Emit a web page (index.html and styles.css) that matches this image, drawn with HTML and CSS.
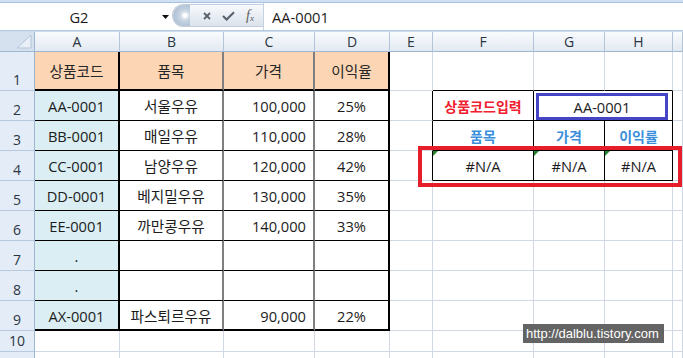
FILE: index.html
```html
<!DOCTYPE html>
<html lang="ko">
<head>
<meta charset="utf-8">
<title>Excel VLOOKUP</title>
<link rel="stylesheet" href="styles.css">
</head>
<body>
<div class="app">
  <div class="ribbon-edge"></div>
  <div class="formula-bar">
    <div class="name-box">G2</div>
    <div class="name-drop"><svg width="7" height="4" viewBox="0 0 7 4"><path d="M0 0H7L3.5 4Z" fill="#111"/></svg></div>
    <div class="fx-group">
      <span class="fx-knob"></span>
      <svg class="fx-cancel" width="8" height="8" viewBox="0 0 8 8"><path d="M1 1L7 7M7 1L1 7" stroke="#59636f" stroke-width="1.9" fill="none"/></svg>
      <svg class="fx-enter" width="13" height="10" viewBox="0 0 13 10"><path d="M1 5L4.6 8.6L12 1.2" stroke="#59636f" stroke-width="2.1" fill="none"/></svg>
      <span class="fx-label"><i>f</i><small>x</small></span>
    </div>
    <div class="formula-input">AA-0001</div>
  </div>
  <div class="bar-sep"></div>

  <div class="sheet">
    <!-- column headers -->
    <div class="c ch corner"><svg width="16" height="14" viewBox="0 0 16 14"><path d="M15 0V13H1Z" fill="#e9eff7" stroke="#b3c3d8"/></svg></div>
    <div class="c ch">A</div><div class="c ch">B</div><div class="c ch">C</div><div class="c ch">D</div>
    <div class="c ch">E</div><div class="c ch">F</div><div class="c ch">G</div><div class="c ch">H</div><div class="c ch"></div>

    <!-- row 1 -->
    <div class="c rh">1</div>
    <div class="c t ca h">상품코드</div><div class="c t cb h">품목</div><div class="c t cc h ctr">가격</div><div class="c t cd h">이익율</div>
    <div class="c"></div><div class="c top"></div><div class="c top"></div><div class="c top"></div><div class="c"></div>

    <!-- row 2 -->
    <div class="c rh">2</div>
    <div class="c t ca">AA-0001</div><div class="c t cb">서울우유</div><div class="c t cc">100,000</div><div class="c t cd">25%</div>
    <div class="c edge"></div><div class="c in red">상품코드입력</div>
    <div class="c in merge"><div class="pick">AA-0001</div></div><div class="c"></div>

    <!-- row 3 -->
    <div class="c rh">3</div>
    <div class="c t ca">BB-0001</div><div class="c t cb">매일우유</div><div class="c t cc">110,000</div><div class="c t cd">28%</div>
    <div class="c edge"></div><div class="c in blue">품목</div><div class="c in blue">가격</div><div class="c in blue">이익률</div><div class="c"></div>

    <!-- row 4 -->
    <div class="c rh">4</div>
    <div class="c t ca">CC-0001</div><div class="c t cb">남양우유</div><div class="c t cc">120,000</div><div class="c t cd">42%</div>
    <div class="c edge"></div><div class="c in err">#N/A</div><div class="c in err">#N/A</div><div class="c in err">#N/A</div><div class="c"></div>

    <!-- row 5 -->
    <div class="c rh">5</div>
    <div class="c t ca">DD-0001</div><div class="c t cb">베지밀우유</div><div class="c t cc">130,000</div><div class="c t cd">35%</div>
    <div class="c"></div><div class="c"></div><div class="c"></div><div class="c"></div><div class="c"></div>

    <!-- row 6 -->
    <div class="c rh">6</div>
    <div class="c t ca">EE-0001</div><div class="c t cb">까만콩우유</div><div class="c t cc">140,000</div><div class="c t cd">33%</div>
    <div class="c"></div><div class="c"></div><div class="c"></div><div class="c"></div><div class="c"></div>

    <!-- row 7 -->
    <div class="c rh">7</div>
    <div class="c t ca">.</div><div class="c t cb"></div><div class="c t cc"></div><div class="c t cd"></div>
    <div class="c"></div><div class="c"></div><div class="c"></div><div class="c"></div><div class="c"></div>

    <!-- row 8 -->
    <div class="c rh">8</div>
    <div class="c t ca">.</div><div class="c t cb"></div><div class="c t cc"></div><div class="c t cd"></div>
    <div class="c"></div><div class="c"></div><div class="c"></div><div class="c"></div><div class="c"></div>

    <!-- row 9 -->
    <div class="c rh">9</div>
    <div class="c t ca last">AX-0001</div><div class="c t cb last">파스퇴르우유</div><div class="c t cc last">90,000</div><div class="c t cd last">22%</div>
    <div class="c"></div><div class="c"></div><div class="c"></div><div class="c"></div><div class="c"></div>

    <!-- row 10 -->
    <div class="c rh">10</div>
    <div class="c"></div><div class="c"></div><div class="c"></div><div class="c"></div>
    <div class="c"></div><div class="c"></div><div class="c"></div><div class="c"></div><div class="c"></div>

    <!-- row 11 (only its top edge is in view) -->
    <div class="c rh"></div>
    <div class="c"></div><div class="c"></div><div class="c"></div><div class="c"></div>
    <div class="c"></div><div class="c"></div><div class="c"></div><div class="c"></div><div class="c"></div>
  </div>

  <div class="callout"></div>
  <div class="watermark">http://dalblu.tistory.com</div>
</div>
</body>
</html>
```
FILE: styles.css
```css
html, body {
  margin: 0;
  padding: 0;
  background: #fff;
}
body {
  width: 683px;
  height: 358px;
  overflow: hidden;
  font-family: "Open Sans", "Noto Sans CJK KR", sans-serif;
  color: #1c1c1c;
}
.app {
  position: relative;
  width: 683px;
  height: 358px;
  overflow: hidden;
}

/* ribbon bottom edge */
.ribbon-edge {
  height: 2px;
  background: #cfe0f4;
  border-bottom: 1px solid #a9c2e2;
}

/* formula bar */
.formula-bar {
  display: flex;
  height: 27px;
  background: #fff;
}
.name-box {
  width: 158px;
  display: flex;
  align-items: center;
  justify-content: center;
  font-size: 14.67px;
}
.name-drop {
  width: 14px;
  display: flex;
  align-items: center;
  justify-content: center;
}
.fx-group {
  box-sizing: border-box;
  width: 91px;
  margin: 1px 0 3px;
  display: flex;
  align-items: center;
  border: 1px solid #c3cedb;
  border-right: none;
  border-radius: 12px 0 0 12px;
  background: linear-gradient(#f7f9fc, #dce3ec);
}
.fx-knob {
  width: 17px;
  height: 21px;
  border-radius: 11px 0 0 11px;
  background: radial-gradient(circle at 12px 50%, #ffffff 0 2px, #dfe6ee 3px, #c4d1e0 6px, #b2c3d8 11px);
}
.fx-cancel { margin-left: 13px; }
.fx-enter { margin-left: 11px; }
.fx-label {
  margin-left: 11px;
  font-family: "Liberation Serif", serif;
  color: #5d5d5d;
  font-size: 14px;
  line-height: 1;
}
.fx-label small {
  font-size: 9px;
  font-style: italic;
  vertical-align: -1px;
}
.formula-input {
  flex: 1;
  display: flex;
  align-items: center;
  padding-left: 8px;
  border-left: 1px solid #c6d2e0;
  font-size: 14.67px;
}
.bar-sep {
  height: 2px;
  background: linear-gradient(#a9bfdc, #dbe5f2);
}

/* sheet grid */
.sheet {
  display: grid;
  grid-template-columns: 35px 85px 104px 91px 75px 43px 101px 71px 68px 10px;
  grid-template-rows: 20px 39px repeat(8, 30px) 21px 21px;
}
.c {
  box-sizing: border-box;
  position: relative;
  display: flex;
  align-items: center;
  justify-content: center;
  border-right: 1px solid #d0d7e5;
  border-bottom: 1px solid #d0d7e5;
  font-size: 14.67px;
  line-height: 1;
  white-space: nowrap;
  overflow: hidden;
  padding-top: 2px;
}
.ch {
  padding-top: 0;
  background: linear-gradient(#f9fbfd, #e2e9f2);
  border-right-color: #b4c5d9;
  border-bottom-color: #9eb6ce;
  font-size: 14px;
  color: #2b3542;
}
.corner {
  background: #d6e1ef;
  border-right-color: #9eb6ce;
  justify-content: flex-end;
  align-items: flex-end;
  padding: 0 2px 2px 0;
}
.rh {
  padding-top: 0;
  background: #e4ecf7;
  border-right-color: #9eb6ce;
  border-bottom-color: #b9c9dd;
  align-items: flex-end;
  padding-bottom: 3px;
  font-size: 14px;
  color: #2b3542;
}

/* data table */
.t {
  border-right: 1px solid #000;
  border-bottom: 1px solid #000;
}
.ca {
  background: #daeef3;
  border-right: 2px solid #000;
}
.cb { border-right: 2px solid #7f7f7f; }
.cc {
  border-right: 2px solid #7f7f7f;
  justify-content: flex-end;
  padding-right: 7px;
}
.cc.ctr {
  justify-content: center;
  padding-right: 0;
}
.cd { border-right: 2px solid #000; }
.h {
  background: #fcd5b4;
  border-bottom: 2px solid #000;
  color: #262626;
}
.last { border-bottom: 2px solid #000; }

/* lookup area */
.edge { border-right-color: #000; }
.top { border-bottom-color: #000; }
.in {
  border-right: 1px solid #000;
  border-bottom: 1px solid #000;
}
.red {
  color: #f0202e;
  font-weight: bold;
  font-size: 14px;
}
.blue {
  color: #3b8fdc;
  font-weight: bold;
  font-size: 14px;
}
.err::before {
  content: "";
  position: absolute;
  left: 0;
  top: 0;
  border-top: 5px solid #22862a;
  border-right: 5px solid transparent;
}
.merge {
  grid-column: span 2;
  align-items: stretch;
  justify-content: stretch;
  padding: 2px 4px 0 2px;
}
.pick {
  flex: 1;
  display: flex;
  align-items: center;
  justify-content: center;
  border: 3px solid #4545c6;
  padding-top: 1px;
}

/* overlays */
.callout {
  position: absolute;
  left: 418px;
  top: 146px;
  width: 264px;
  height: 41px;
  box-sizing: border-box;
  border: 4px solid #e61e2a;
}
.watermark {
  position: absolute;
  left: 523px;
  top: 324px;
  width: 141px;
  height: 19px;
  box-sizing: border-box;
  padding-left: 3px;
  background: #646464;
  color: #fff;
  font-family: "Liberation Sans", sans-serif;
  font-size: 13px;
  line-height: 19px;
  white-space: nowrap;
}
```
